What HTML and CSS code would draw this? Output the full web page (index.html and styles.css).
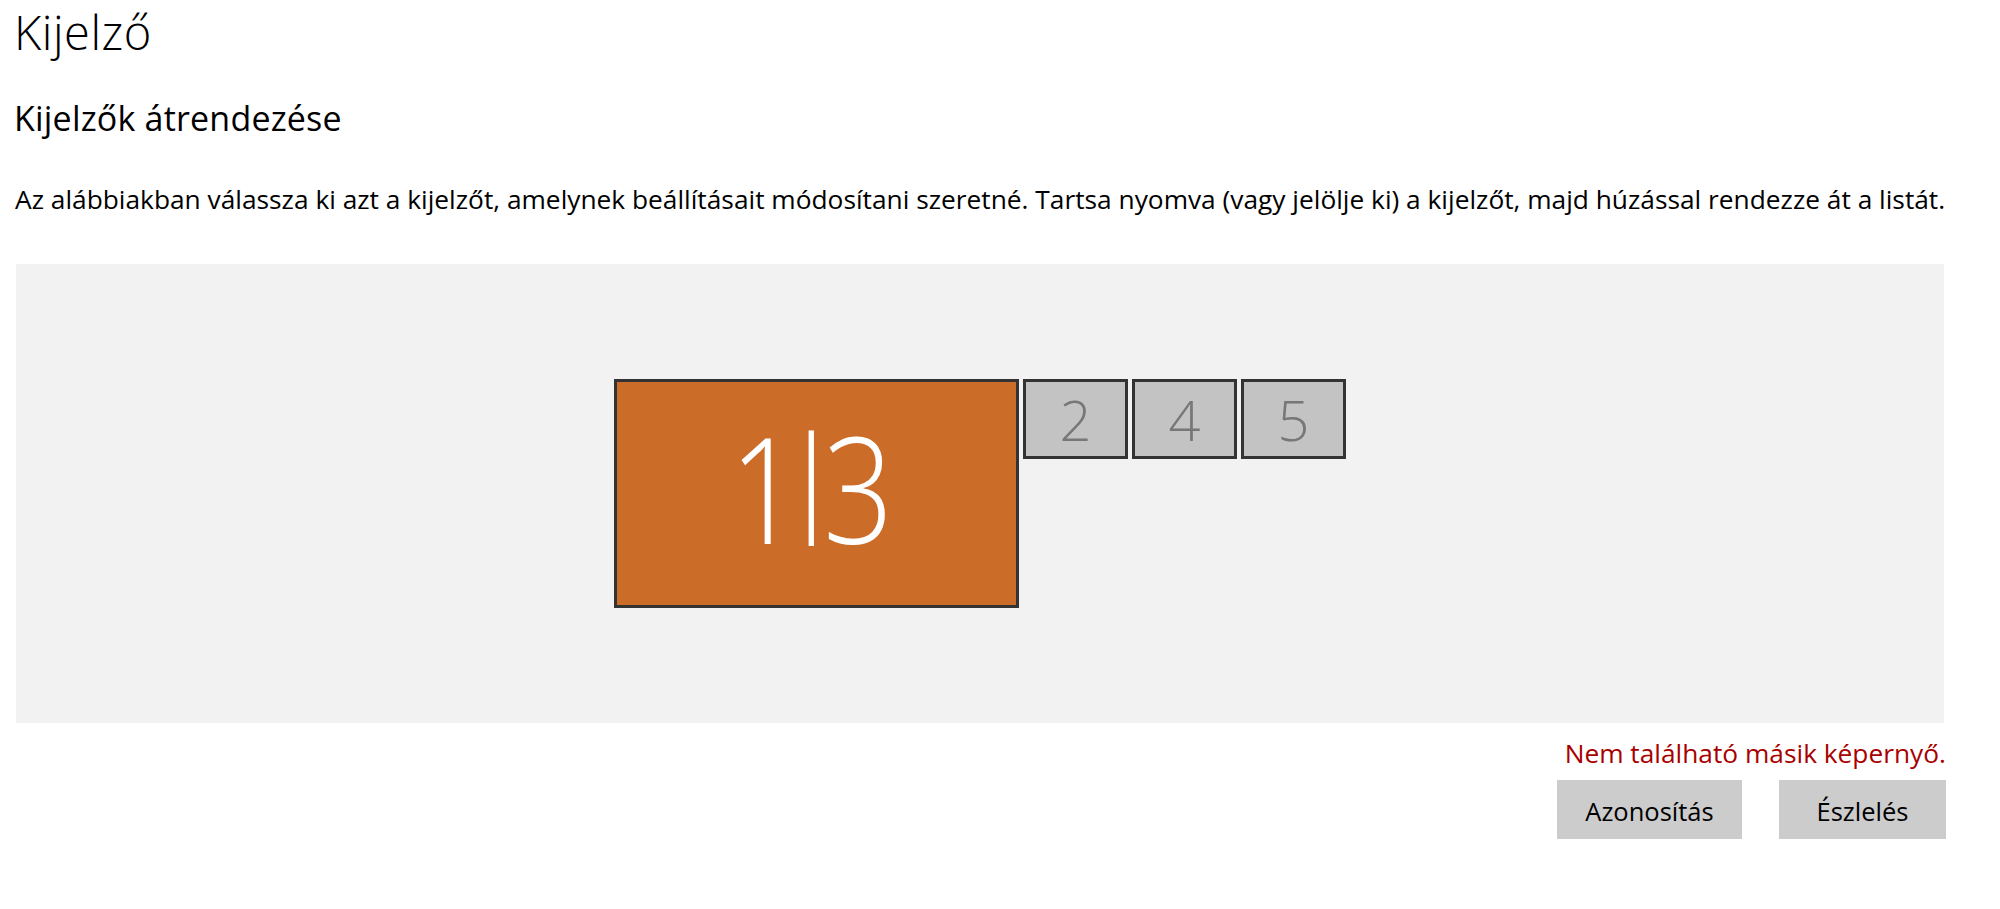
FILE: index.html
```html
<!DOCTYPE html>
<html lang="hu">
<head>
    <meta charset="UTF-8">
    <title>Kijelző</title>
    <link rel="stylesheet" href="styles.css">
</head>
<body>

<div class="page">
    <h1 class="title">Kijelző</h1>
    <h2 class="subtitle">Kijelzők átrendezése</h2>
    <p class="intro">Az alábbiakban válassza ki azt a kijelzőt, amelynek beállításait módosítani szeretné. Tartsa nyomva (vagy jelölje ki) a kijelzőt, majd húzással rendezze át a listát.</p>

    <div class="canvas">
        <div class="monitors">
            <div class="monitor main"><span class="label">1<span class="bar">|</span>3</span></div>
            <div class="monitor small">2</div>
            <div class="monitor small">4</div>
            <div class="monitor small">5</div>
        </div>
    </div>

    <div class="status">Nem található másik képernyő.</div>
    <div class="actions">
        <button class="btn btn-id">Azonosítás</button>
        <button class="btn btn-detect">Észlelés</button>
    </div>
</div>

</body>
</html>
```

FILE: styles.css
```css
/* Kijelző beállítások */
body {
    margin: 0;
    padding: 0;
    background-color: #ffffff;
    font-family: "Open Sans", "Noto Sans", sans-serif;
    color: #000;
}
.page {
    width: 1932px;
    margin-left: 14px;
}
.title {
    font-size: 47px;
    font-weight: 300;
    margin: 0;
    line-height: 64px;
    letter-spacing: 0.5px;
}
.subtitle {
    font-size: 34px;
    font-weight: 400;
    margin: 34px 0 0 0;
    line-height: 40px;
    letter-spacing: 0.2px;
}
.intro {
    font-size: 26.3px;
    margin: 45px 0 0 1px;
    line-height: 32px;
    white-space: nowrap;
}
.canvas {
    background-color: #f2f2f2;
    height: 459px;
    margin: 49px 2px 0 2px;
    display: flex;
    justify-content: center;
    align-items: center;
}
.monitors {
    display: flex;
    align-items: flex-start;
    gap: 4px;
}
.monitor {
    box-sizing: border-box;
    border: 3px solid #333;
    display: flex;
    justify-content: center;
    align-items: center;
    font-weight: 300;
}
.main {
    width: 405px;
    height: 229px;
    background-color: #cc6c29;
    color: #fff;
    font-size: 148px;
    line-height: 148px;
}
.main .label {
    display: inline-block;
    letter-spacing: -26px;
    padding-right: 38px;
    transform: scaleX(0.83);
    margin-top: -14px;
}
.main .bar {
    display: inline-block;
    transform: scaleY(0.776);
    transform-origin: 50% 13px;
}
.small {
    width: 105px;
    height: 80px;
    background-color: #c3c3c3;
    color: #777;
    font-size: 56px;
}
.status {
    text-align: right;
    color: #a80000;
    font-size: 26.3px;
    margin-top: 14px;
    line-height: 32px;
}
.actions {
    display: flex;
    justify-content: flex-end;
    gap: 37px;
    margin-top: 11px;
}
.btn {
    font-family: "Open Sans", "Noto Sans", sans-serif;
    font-size: 25.5px;
    background-color: #cccccc;
    color: #000;
    border: none;
    height: 59px;
    padding: 3px 0 0 0;
    cursor: pointer;
}
.btn-id {
    width: 185px;
}
.btn-detect {
    width: 167px;
}
```
